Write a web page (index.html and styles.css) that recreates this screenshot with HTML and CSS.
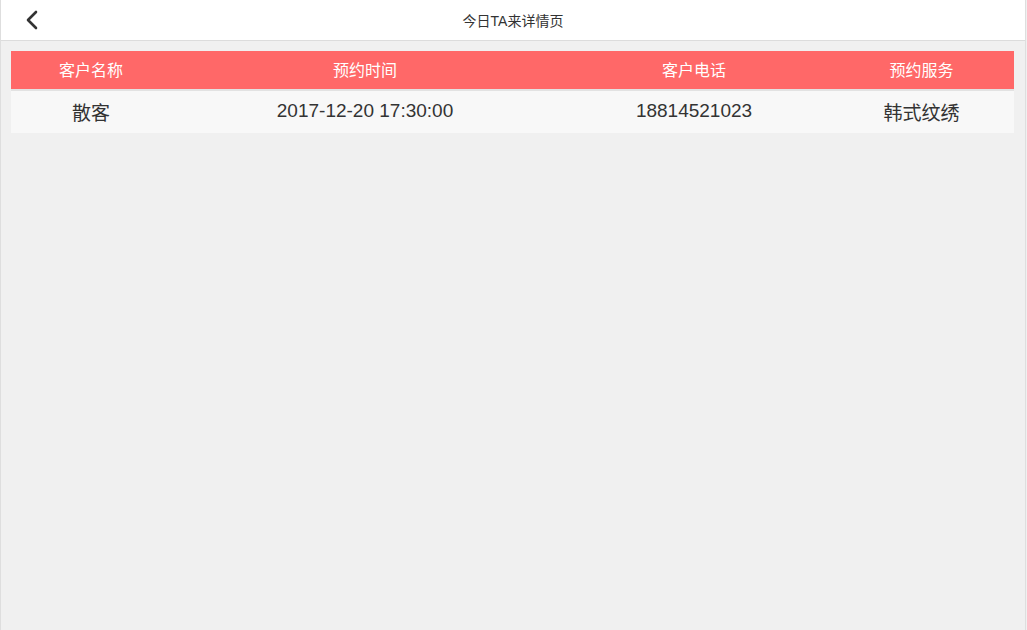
FILE: index.html
```html
<!DOCTYPE html>
<html lang="zh-CN">
<head>
    <meta charset="UTF-8">
    <meta name="viewport" content="width=device-width, initial-scale=1.0">
    <title>今日TA来详情页</title>
    <link rel="stylesheet" href="styles.css">
</head>
<body>

    <!-- Header -->
    <div class="header">
        <a href="#" class="back">
            <svg width="14" height="20" viewBox="0 0 14 20">
                <path d="M11 2 L3 10 L11 18" fill="none" stroke="#333" stroke-width="2.6" stroke-linecap="round" stroke-linejoin="round"/>
            </svg>
        </a>
        <div class="title">今日TA来详情页</div>
    </div>

    <!-- Content -->
    <div class="content">
        <table class="list">
            <thead>
                <tr>
                    <th class="col-name">客户名称</th>
                    <th class="col-time">预约时间</th>
                    <th class="col-phone">客户电话</th>
                    <th class="col-service">预约服务</th>
                </tr>
            </thead>
            <tbody>
                <tr>
                    <td>散客</td>
                    <td>2017-12-20 17:30:00</td>
                    <td>18814521023</td>
                    <td>韩式纹绣</td>
                </tr>
            </tbody>
        </table>
    </div>

</body>
</html>
```

FILE: styles.css
```css
html, body {
    height: 100%;
}
body {
    font-family: "Liberation Sans", Arial, "Noto Sans CJK SC", sans-serif;
    margin: 0;
    background-color: #f0f0f0;
    border-left: 1px solid #dedede;
    border-right: 1px solid #dedede;
    box-sizing: border-box;
    width: 1026px;
}
.header {
    height: 40px;
    background-color: #fff;
    border-bottom: 1px solid #dcdcdc;
    display: flex;
    align-items: center;
    justify-content: center;
    position: relative;
}
.back {
    position: absolute;
    left: 24px;
    top: 10px;
    display: block;
    line-height: 0;
}
.title {
    font-size: 14px;
    color: #333;
}

.content {
    padding: 10px 10px 0 10px;
}

.list {
    width: 1003px;
    border-collapse: collapse;
    table-layout: fixed;
}
.list th {
    background-color: #ff6868;
    color: #fff;
    font-size: 16px;
    font-weight: normal;
    height: 36px;
    padding: 0 0 2px 0;
    border-bottom: 2px solid #e2e2e2;
}
.col-name { width: 160px; }
.col-time { width: 388px; }
.col-phone { width: 270px; }
.col-service { width: 185px; }

.list td {
    background-color: #f8f8f8;
    color: #333;
    font-size: 19px;
    height: 40px;
    padding: 0 0 2px 0;
    text-align: center;
}
```
